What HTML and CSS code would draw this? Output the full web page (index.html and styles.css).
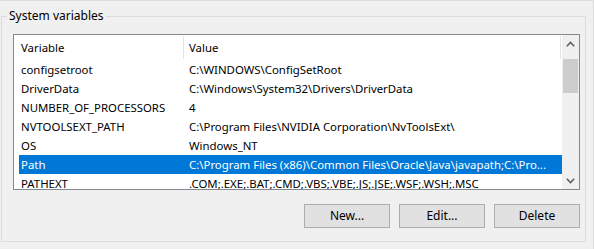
FILE: index.html
```html
<!DOCTYPE html>
<html>
<head>
<meta charset="utf-8">
<link rel="stylesheet" href="styles.css">
</head>
<body>
<div class="window">
  <fieldset class="group">
    <legend class="legend">System variables</legend>
    <div class="list">
      <div class="table">
        <div class="row header"><div class="c1">Variable</div><div class="c2">Value</div></div>
        <div class="row"><div class="c1">configsetroot</div><div class="c2">C:\WINDOWS\ConfigSetRoot</div></div>
        <div class="row"><div class="c1">DriverData</div><div class="c2">C:\Windows\System32\Drivers\DriverData</div></div>
        <div class="row"><div class="c1">NUMBER_OF_PROCESSORS</div><div class="c2">4</div></div>
        <div class="row"><div class="c1">NVTOOLSEXT_PATH</div><div class="c2">C:\Program Files\NVIDIA Corporation\NvToolsExt\</div></div>
        <div class="row"><div class="c1">OS</div><div class="c2">Windows_NT</div></div>
        <div class="row selected"><div class="c1">Path</div><div class="c2">C:\Program Files (x86)\Common Files\Oracle\Java\javapath;C:\Pro...</div></div>
        <div class="row"><div class="c1">PATHEXT</div><div class="c2">.COM;.EXE;.BAT;.CMD;.VBS;.VBE;.JS;.JSE;.WSF;.WSH;.MSC</div></div>
      </div>
      <div class="scrollbar">
        <div class="sb-btn"><svg width="9" height="6" viewBox="0 0 9 6"><polyline points="0.8,5.2 4.5,1.5 8.2,5.2" fill="none" stroke="#606060" stroke-width="1.6"/></svg></div>
        <div class="sb-track"><div class="sb-thumb"></div></div>
        <div class="sb-btn"><svg width="9" height="6" viewBox="0 0 9 6"><polyline points="0.8,0.8 4.5,4.5 8.2,0.8" fill="none" stroke="#606060" stroke-width="1.6"/></svg></div>
      </div>
    </div>
    <div class="buttons">
      <button class="btn">New...</button>
      <button class="btn">Edit...</button>
      <button class="btn">Delete</button>
    </div>
  </fieldset>
</div>
</body>
</html>
```

FILE: styles.css
```css
html, body {
  margin: 0;
  padding: 0;
  background: #f0f0f0;
}
body {
  font-family: "Segoe UI", "Noto Sans", "Open Sans", sans-serif;
  font-size: 11.4px;
  line-height: 16px;
  color: #000;
}
.window {
  width: 594px;
  height: 249px;
  box-sizing: border-box;
  border-top: 1px solid #dcdcdc;
  border-right: 1px solid #dcdcdc;
  overflow: hidden;
}
.group {
  margin: 7px 0 0 1px;
  width: 585px;
  box-sizing: border-box;
  border: 1px solid #dcdcdc;
  padding: 0 5px 13px 11px;
  min-width: 0;
}
.legend {
  padding: 0 2px;
  margin-left: -6px;
  line-height: 16px;
  font-size: 12px;
}
.list {
  margin-top: 10px;
  width: 567px;
  height: 156px;
  box-sizing: border-box;
  border: 1px solid #828790;
  background: #fff;
  display: flex;
  overflow: hidden;
}
.table {
  flex: 1;
  min-width: 0;
  overflow: hidden;
}
.row {
  display: flex;
  align-items: center;
  height: 19px;
  margin-left: 5px;
  white-space: nowrap;
}
.row .c1 {
  width: 164px;
  padding-left: 2px;
  box-sizing: border-box;
  flex: none;
}
.row .c2 {
  flex: 1;
  min-width: 0;
  padding-left: 6px;
  overflow: hidden;
}
.row.header {
  height: 25px;
  margin-left: 0;
  align-items: stretch;
}
.row.header .c1 {
  width: 170px;
  padding-left: 7px;
  border-right: 1px solid #e5e5e5;
  margin: 1px 0;
  display: flex;
  align-items: center;
}
.row.header .c2 {
  padding-left: 5px;
  border-right: 1px solid #e5e5e5;
  margin: 1px 1px 1px 0;
  display: flex;
  align-items: center;
}
.row.selected {
  background: #0078d7;
  color: #fff;
}
.scrollbar {
  width: 17px;
  flex: none;
  background: #f0f0f0;
  display: flex;
  flex-direction: column;
}
.sb-btn {
  height: 17px;
  display: flex;
  align-items: center;
  justify-content: center;
  flex: none;
}
.sb-track {
  flex: 1;
  padding-top: 7px;
}
.sb-thumb {
  width: 15px;
  height: 34px;
  margin-left: 1px;
  background: #cdcdcd;
}
.buttons {
  display: flex;
  justify-content: flex-end;
  gap: 9px;
  margin-top: 14px;
  width: 567px;
}
.btn {
  width: 86px;
  height: 24px;
  box-sizing: border-box;
  background: #e1e1e1;
  border: 1px solid #adadad;
  font: inherit;
  font-size: 12px;
  color: #000;
  padding: 0;
  margin: 0;
}
```
